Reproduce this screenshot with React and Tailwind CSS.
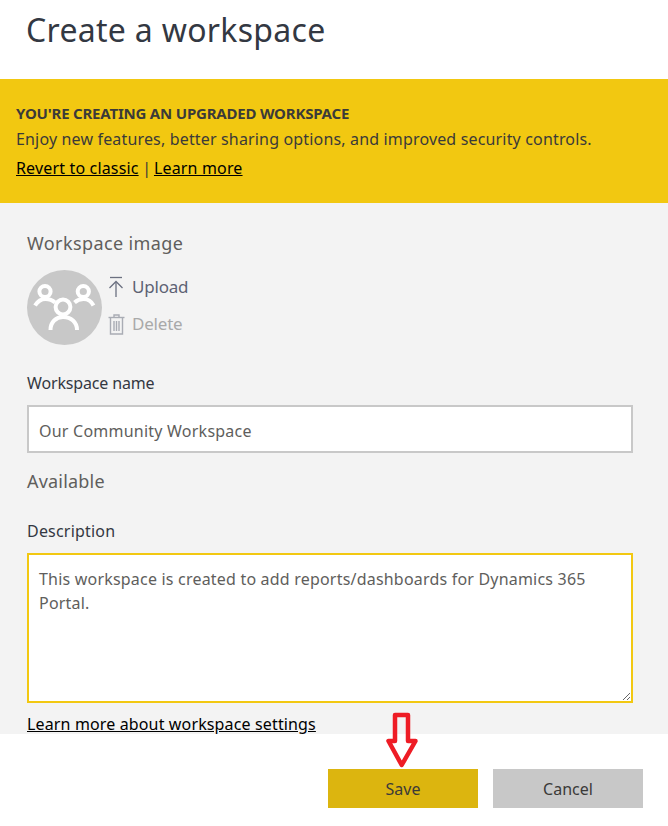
import React from 'react'

const font = "font-['Noto_Sans','Open_Sans',sans-serif]"

const GroupIcon = () => (
    <svg width="75" height="75" viewBox="0 0 75 75" fill="none">
        <circle cx="37.5" cy="37.5" r="37.5" fill="#c8c8c8" />
        <g stroke="#fff" strokeWidth="4">
            <circle cx="18" cy="21.500" r="5.600" />
            <circle cx="56.300" cy="21.500" r="5.600" />
            <circle cx="36" cy="37" r="7.400" />
            <path d="M8 35.500c2.500-4 6-6.500 10.500-6.500 4 0 7 1.200 9.500 3.500" />
            <path d="M47.500 32.500c2.500-2.300 5.500-3.500 9-3.500 4.500 0 8 2.500 10 6.500" />
            <path d="M23.500 60c0-8 5.500-13 12.500-13 8 0 14 5 14 13" />
        </g>
    </svg>
)

const UploadIcon = () => (
    <svg width="16" height="22" viewBox="0 0 16 22" fill="none" stroke="#6b7080" strokeWidth="1.3">
        <path d="M2 1.500h12" />
        <path d="M8 21V6" />
        <path d="M1.500 12 8 5.500l6.500 6.500" />
    </svg>
)

const TrashIcon = () => (
    <svg width="17" height="21" viewBox="0 0 17 21" fill="none" stroke="#a9acb4" strokeWidth="1.4">
        <path d="M0.500 3.500h16" />
        <path d="M6 3.500V1h5v2.500" />
        <path d="M2.500 3.500V20h12V3.500" />
        <path d="M6 7v10M8.500 7v10M11 7v10" />
    </svg>
)

const SaveArrow = () => (
    <svg width="32" height="58" viewBox="0 0 32 58" fill="none" className="absolute left-[386px] top-[711px]">
        <path d="M9 4h13v26h7.500L15.700 54 2.500 30H9z" stroke="#ee1c25" strokeWidth="4.500" strokeLinejoin="round" />
    </svg>
)

const App = () => {
    return (
        <div className={`relative w-[668px] h-[826px] bg-white overflow-hidden ${font}`}>
            <div className='h-[79px] pl-[26px] pt-[8px]'>
                <h1 className='text-[32px] leading-[44px] text-[#333842] tracking-[0.3px]'>Create a workspace</h1>
            </div>

            <div className='h-[124px] bg-[#f2c811] px-4 pt-[23px] text-[#3b3a39]'>
                <p className='text-[15px] leading-[23px] font-bold tracking-[-0.2px]'>YOU'RE CREATING AN UPGRADED WORKSPACE</p>
                <p className='text-[16px] leading-[28px] tracking-[0.16px]'>Enjoy new features, better sharing options, and improved security controls.</p>
                <p className='mt-[1px] text-[16px] leading-[28px] tracking-[0.16px]'>
                    <a href="#" className='text-black underline'>Revert to classic</a>
                    <span className='tracking-[-0.6px]'> | </span>
                    <a href="#" className='text-black underline'>Learn more</a>
                </p>
            </div>

            <div className='h-[531px] bg-[#f3f3f3] pl-[27px] pr-[35px] pt-[27px]'>
                <p className='text-[18px] leading-[26px] text-[#605e5c] tracking-[0.4px]'>Workspace image</p>
                <div className='flex mt-[14px] gap-[6px]'>
                    <GroupIcon />
                    <div className='flex flex-col gap-[15px] pt-[6px]'>
                        <div className='flex items-center gap-[8px]'>
                            <UploadIcon />
                            <span className='text-[17px] leading-[22px] text-[#5d6273] tracking-[-0.2px]'>Upload</span>
                        </div>
                        <div className='flex items-center gap-[7px]'>
                            <TrashIcon />
                            <span className='text-[17px] leading-[22px] text-[#a9a9a9] tracking-[-0.2px]'>Delete</span>
                        </div>
                    </div>
                </div>

                <p className='mt-[27px] text-[16px] leading-[22px] text-[#333842] tracking-[-0.15px]'>Workspace name</p>
                <div className='mt-[11px] h-[48px] bg-white border-2 border-[#c8c8c8] pl-[10px] pt-[3px] flex items-center text-[16px] text-[#605e5c] tracking-[0.23px]'>
                    Our Community Workspace
                </div>
                <p className='mt-[15px] text-[18px] leading-[26px] text-[#605e5c] tracking-[0.2px]'>Available</p>

                <p className='mt-[26px] text-[16px] leading-[22px] text-[#333842] tracking-[0.2px]'>Description</p>
                <textarea
                    readOnly
                    className='block mt-[11px] w-full h-[150px] bg-white border-2 border-[#f2c811] pl-[10px] pr-3 pt-[12px] text-[16px] leading-[24px] text-[#605e5c] tracking-[0.2px] outline-none'
                    value="This workspace is created to add reports/dashboards for Dynamics 365 Portal."
                />
                <a href="#" className='block mt-[10px] text-[16px] leading-[22px] text-black underline tracking-[0.14px]'>Learn more about workspace settings</a>
            </div>

            <div className='flex justify-end gap-[15px] pr-[25px] pt-[35px]'>
                <button className='w-[150px] h-[39px] bg-[#dcb50f] text-[16px] text-[#3b3a39]'>Save</button>
                <button className='w-[150px] h-[39px] bg-[#c8c8c8] text-[16px] text-[#3b3a39]'>Cancel</button>
            </div>

            <SaveArrow />
        </div>
    )
}

export default App
